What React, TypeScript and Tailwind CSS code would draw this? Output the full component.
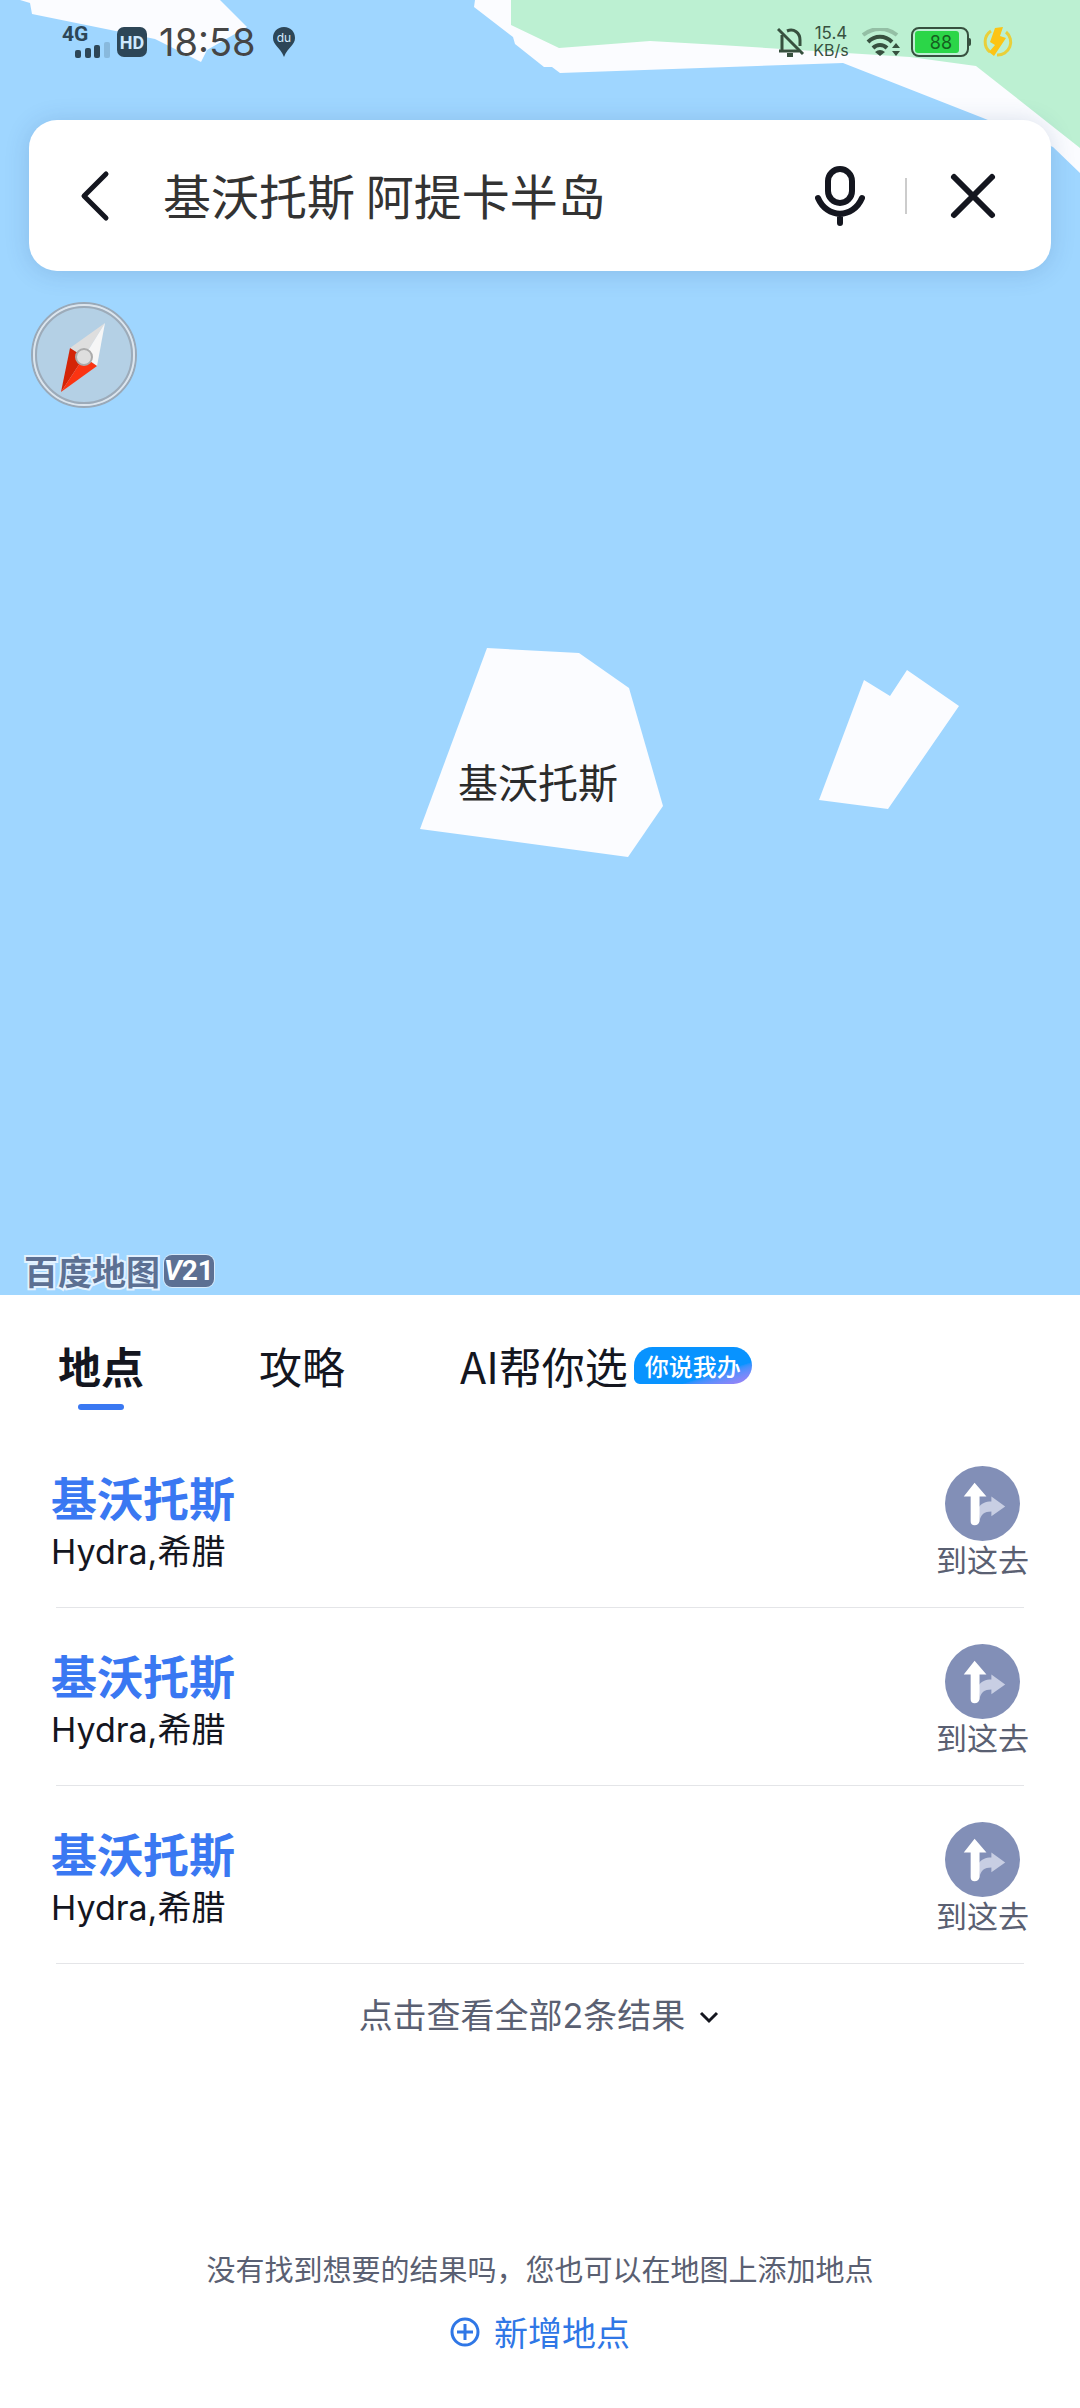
const results = [
  { id: 1, name: "基沃托斯", region: "Hydra,希腊" },
  { id: 2, name: "基沃托斯", region: "Hydra,希腊" },
  { id: 3, name: "基沃托斯", region: "Hydra,希腊" },
];

function MapCanvas() {
  return (
    <svg
      className="absolute inset-0 h-full w-full"
      viewBox="0 0 1080 1295"
      preserveAspectRatio="xMidYMin slice"
      aria-hidden="true"
    >
      <rect width="1080" height="1295" fill="#9fd6ff" />
      <g fill="#fbfcff">
        <path d="M20 0L30 3L32 14L155 39L201 62L207 50L247 27L220 0Z" />
        <path d="M475 0L474 7L513 37L515 44L544 67H552L560 73L843 63L983 118L1053 147L1080 173V0Z" />
        <path d="M487 648L579 653L629 688L663 806L628 857L420 829Z" />
        <path d="M864 680L890 696L907 670L959 706L888 809L819 800Z" />
      </g>
      <path
        d="M511 0V25L559 48L650 41L720 45L910 57L976 66L1080 148V0Z"
        fill="#bcf0d2"
      />
    </svg>
  );
}

function StatusBar() {
  return (
    <div className="relative flex h-[84px] items-center justify-between pr-[67px] pl-[62px] font-['Inter','Noto_Sans_CJK_SC',sans-serif] text-[#454545]">
      <div className="flex items-center">
        <div className="flex w-[50px] flex-col text-[#2d4657]">
          <span className="font-['Roboto',sans-serif] text-[21px] leading-4 font-bold">
            4G
          </span>
          <svg className="ml-3 h-4 w-9" viewBox="0 0 36 16" fill="currentColor">
            <rect x="1" y="8" width="6" height="8" rx="2" />
            <rect x="11" y="6" width="6" height="10" rx="2" />
            <rect x="20" y="3" width="6" height="13" rx="2" />
            <rect x="30" y="0" width="6" height="16" rx="2" opacity="0.2" />
          </svg>
        </div>
        <span className="ml-[5px] flex h-[30px] w-[30px] items-center justify-center rounded-[7px] bg-[#2d4657] font-['Roboto',sans-serif] text-[18px] font-bold text-[#cde9ff]">
          HD
        </span>
        <span className="ml-3 text-[38px] leading-10">18:58</span>
        <svg className="ml-4 h-[30px] w-6" viewBox="0 0 24 30">
          <path
            d="M12 0C5 0 1 5 1 11C1 18 8 20 12 30C16 20 23 18 23 11C23 5 19 0 12 0Z"
            fill="#2d4657"
          />
          <text
            x="12"
            y="15"
            textAnchor="middle"
            fontSize="12"
            fill="#d5ecff"
          >
            du
          </text>
        </svg>
      </div>

      <div className="flex items-center text-[#37503f]">
        <svg
          className="h-[30px] w-7"
          viewBox="0 0 28 30"
          fill="none"
          stroke="currentColor"
          strokeWidth="3"
        >
          <path d="M1 2L26 27" />
          <path d="M5 8V24H21M2 24H22M10 4C17 1 23 6 23 13V19" />
          <path d="M10 28H16" strokeWidth="4" />
        </svg>
        <div className="ml-[7px] flex w-[38px] flex-col items-center text-[17px] leading-[17px]">
          <span className="h-[17px]">15.4</span>
          <span className="h-[17px] text-[16px]">KB/s</span>
        </div>
        <svg className="ml-3 h-7 w-[38px]" viewBox="0 0 38 28" fill="none">
          <path
            d="M1 7C11-1 25-1 35 7"
            stroke="currentColor"
            strokeWidth="4"
            opacity="0.3"
          />
          <path
            d="M6 14C13 7 23 7 30 14M11 20C15 16 21 16 25 20"
            stroke="currentColor"
            strokeWidth="4"
          />
          <path
            d="M13 24Q18 20 23 24L18 28ZM34 15L38 20H30ZM30 23H38L34 28Z"
            fill="currentColor"
          />
        </svg>
        <div className="ml-[11px] flex h-[30px] w-[58px] rounded-lg border-2 border-[#37503f] p-[2px]">
          <div className="flex w-[44px] items-center justify-center rounded-[3px] bg-[#2bd648] pl-2 text-[18px] text-[#16601f]">
            88
          </div>
        </div>
        <span className="h-2 w-[2px] rounded-r-sm bg-[#37503f]" />
        <svg className="ml-3 h-[30px] w-[30px]" viewBox="0 0 30 30">
          <path
            d="M8 4A13 13 0 0 0 7 25M23 5A13 13 0 0 1 14 28"
            fill="none"
            stroke="#e9cf3a"
            strokeWidth="3"
          />
          <path
            d="M12 1L20 0L17 9L23 11L11 29L6 25L12 18L7 15Z"
            fill="#fcc415"
          />
        </svg>
      </div>
    </div>
  );
}

function SearchBar() {
  return (
    <form className="relative mx-[29px] mt-9 flex h-[151px] items-center rounded-[28px] bg-white pr-[50px] pl-[46px] shadow-[0_2px_24px_rgba(40,70,130,0.18)]">
      <button type="button" aria-label="返回" className="p-1">
        <svg
          className="h-[52px] w-8"
          viewBox="0 0 32 52"
          fill="none"
          stroke="#14161f"
          strokeWidth="5"
          strokeLinecap="round"
          strokeLinejoin="round"
        >
          <path d="M27 4L5 26L27 48" />
        </svg>
      </button>
      <input
        type="text"
        aria-label="搜索地点"
        defaultValue="基沃托斯 阿提卡半岛"
        className="mb-1 ml-12 min-w-0 flex-1 bg-transparent text-[48px] leading-[60px] text-[#333333] outline-none"
      />
      <button type="button" aria-label="语音搜索" className="p-1">
        <svg
          className="h-[60px] w-[50px]"
          viewBox="0 0 50 60"
          fill="none"
          stroke="#14161f"
          strokeWidth="6"
          strokeLinecap="round"
        >
          <rect x="13" y="3" width="24" height="34" rx="12" />
          <path d="M3 32C12 53 38 53 47 32M25 49V57" />
        </svg>
      </button>
      <span className="mr-[38px] ml-9 h-9 w-[2px] bg-[#cccccc]" />
      <button type="button" aria-label="清除" className="p-1">
        <svg
          className="h-[48px] w-[48px]"
          viewBox="0 0 48 48"
          fill="none"
          stroke="#14161f"
          strokeWidth="6"
          strokeLinecap="round"
        >
          <path d="M5 5L43 43M43 5L5 43" />
        </svg>
      </button>
    </form>
  );
}

function Compass() {
  return (
    <button type="button" aria-label="指南针" className="relative mt-[30px] ml-[30px] block">
      <svg className="h-[108px] w-[108px]" viewBox="0 0 108 108">
        <circle cx="54" cy="54" r="52" fill="#b4d0e5" stroke="#9aa9b8" strokeWidth="2" />
        <circle cx="54" cy="54" r="50" fill="none" stroke="#dde5ed" strokeWidth="2" />
        <circle cx="54" cy="54" r="48" fill="none" stroke="#9dabb9" strokeWidth="2" />
        <path d="M75 22L40 47L54 56Z" fill="#dedede" />
        <path d="M75 22L67 65L54 56Z" fill="#f6f6f6" />
        <path d="M31 91L40 47L54 56Z" fill="#d42407" />
        <path d="M31 91L67 65L54 56Z" fill="#fb3412" />
        <circle cx="54" cy="56" r="8" fill="#dedede" stroke="#ababab" strokeWidth="2" />
      </svg>
    </button>
  );
}

function RouteIcon() {
  return (
    <svg className="h-[75px] w-[75px]" viewBox="0 0 76 76">
      <circle cx="38" cy="38" r="38" fill="#828fb7" />
      <path
        d="M34 42C37 38 41 36 47 36V31L61 41L47 51V46C40 46 36 49 35 56Z"
        fill="#c8cee3"
      />
      <path
        d="M30 17L42 31H35V56Q34 60 30 60Q26 60 26 56V31H19Z"
        fill="#ffffff"
      />
    </svg>
  );
}

export default function App() {
  return (
    <main className="min-h-screen bg-white font-['Noto_Sans_CJK_SC',sans-serif] text-[#14161f]">
      <section className="relative h-[1295px] overflow-hidden">
        <MapCanvas />
        <StatusBar />
        <SearchBar />
        <Compass />
        <span className="absolute top-[753px] left-[458px] text-[40px] leading-[56px] text-[#2b2b2b]">
          基沃托斯
        </span>
        <div className="absolute bottom-[6px] left-6 flex items-center gap-1">
          <span className="text-[34px] leading-9 font-bold text-[#5c7093] [-webkit-text-stroke:4px_#e3f2ff] [paint-order:stroke_fill]">
            百度地图
          </span>
          <span className="flex h-8 w-[50px] items-center justify-center rounded-lg bg-[#5c7093] font-['Roboto',sans-serif] text-[28px] font-bold text-white ring-1 ring-[#d5e9fa]">
            <i>V</i>21
          </span>
        </div>
      </section>

      <nav className="flex items-start pt-[38px] pl-[58px] text-[43px] leading-[64px]">
        <button type="button" className="flex flex-col items-center font-bold">
          地点
          <span className="mt-[7px] h-[6px] w-[46px] rounded-full bg-[#3a78f2]" />
        </button>
        <button type="button" className="ml-[115px]">
          攻略
        </button>
        <button type="button" className="ml-[115px] flex items-center">
          AI帮你选
          <span className="ml-[6px] rounded-[19px] rounded-bl-md bg-linear-to-br from-[#0893ff] from-70% to-[#a67df5] px-[11px] text-[24px] leading-[37px] font-medium text-white">
            你说我办
          </span>
        </button>
      </nav>

      <ul className="mt-5">
        {results.map((item) => (
          <li
            key={item.id}
            className="relative mx-[51px] flex h-[178px] items-start justify-between pt-9 after:absolute after:right-[5px] after:bottom-0 after:left-[5px] after:h-px after:bg-[#e4e5e8]"
          >
            <a href="#place" className="flex flex-col">
              <span className="text-[46px] leading-[60px] font-bold text-[#3a78f2]">
                {item.name}
              </span>
              <span className="font-['Inter','Noto_Sans_CJK_SC',sans-serif] text-[34px] leading-[52px]">
                {item.region}
              </span>
            </a>
            <button
              type="button"
              className="flex flex-col items-center text-[31px] leading-9 text-[#5a6072]"
            >
              <RouteIcon />
              到这去
            </button>
          </li>
        ))}
      </ul>

      <button
        type="button"
        className="mx-auto mt-7 flex items-center font-['Inter','Noto_Sans_CJK_SC',sans-serif] text-[34px] leading-12 text-[#5a6072]"
      >
        点击查看全部2条结果
        <svg
          className="ml-3 h-5 w-6"
          viewBox="0 0 24 20"
          fill="none"
          stroke="#14161f"
          strokeWidth="3"
        >
          <path d="M4 7L12 15L20 7" />
        </svg>
      </button>

      <footer className="mt-52 flex flex-col items-center pb-10">
        <p className="text-[29px] leading-10 text-[#5a6072]">
          没有找到想要的结果吗，您也可以在地图上添加地点
        </p>
        <button
          type="button"
          className="mt-5 flex items-center gap-[14px] text-[34px] leading-12 text-[#2f77e6]"
        >
          <svg
            className="h-[30px] w-[30px]"
            viewBox="0 0 30 30"
            fill="none"
            stroke="currentColor"
            strokeWidth="3"
          >
            <circle cx="15" cy="15" r="13" />
            <path d="M15 7V23M7 15H23" />
          </svg>
          新增地点
        </button>
      </footer>
    </main>
  );
}
